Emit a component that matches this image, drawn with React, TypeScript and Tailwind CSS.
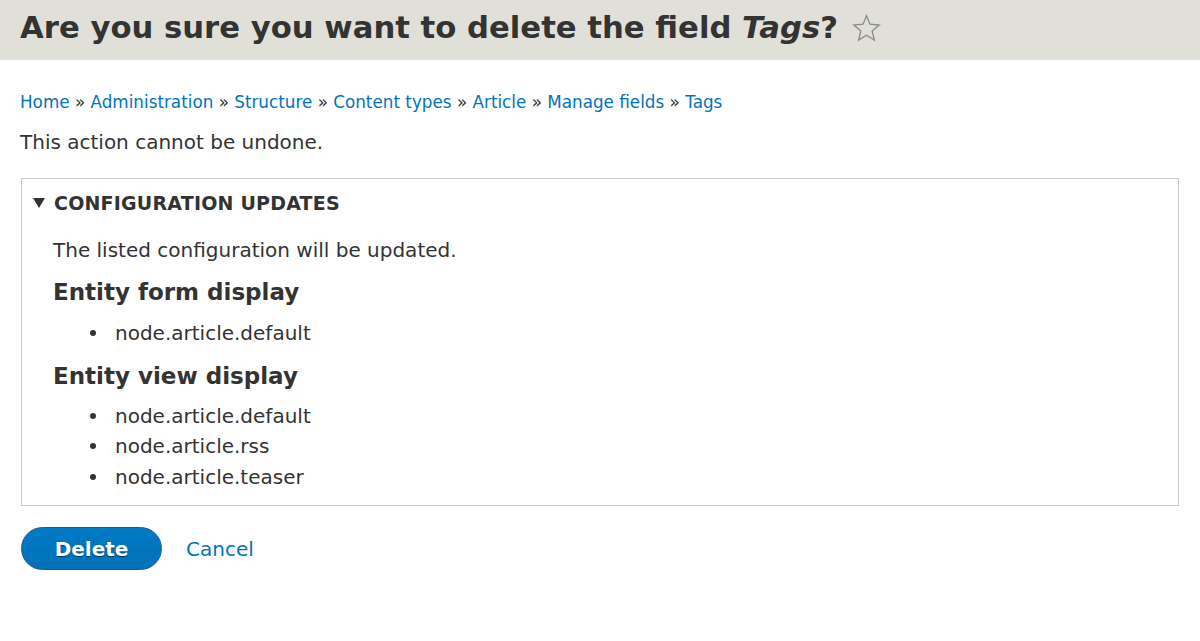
import React from "react";

const crumbs = [
  "Home",
  "Administration",
  "Structure",
  "Content types",
  "Article",
  "Manage fields",
  "Tags",
];

const formDisplays = ["node.article.default"];
const viewDisplays = ["node.article.default", "node.article.rss", "node.article.teaser"];

const StarIcon = () => (
  <svg width="29" height="29" viewBox="0 0 24 24" fill="none" stroke="#8a8a8a" strokeWidth="1.1" strokeLinejoin="miter">
    <polygon points="12,1.5 14.9,8.4 22.5,9.1 16.7,14 18.5,21.6 12,17.6 5.5,21.6 7.3,14 1.5,9.1 9.1,8.4" />
  </svg>
);

const ItemList = ({ items }: { items: string[] }) => (
  <ul className="text-[20px] leading-[30.5px]">
    {items.map((item) => (
      <li key={item} className="flex items-center">
        <span className="ml-[37px] mr-[19px] h-[6px] w-[6px] rounded-full bg-[#333]" />
        {item}
      </li>
    ))}
  </ul>
);

const App = () => {
  return (
    <div className="min-h-[641px] bg-white text-[#333] font-['DejaVu_Sans','Liberation_Sans',sans-serif]">
      <div className="h-[60px] bg-[#e0e0d8] px-5 flex items-center pb-[3px]">
        <h1 className="text-[30.7px] leading-none font-bold flex items-center">
          <span>
            Are you sure you want to delete the field <em className="italic">Tags</em>?
          </span>
          <span className="ml-[14px] inline-flex">
            <StarIcon />
          </span>
        </h1>
      </div>

      <div className="px-5">
        <nav className="mt-[30px] text-[16.8px] leading-[24px]">
          {crumbs.map((c, i) => (
            <span key={c}>
              <a href="#" className="text-[#0074bd]">
                {c}
              </a>
              {i < crumbs.length - 1 && <span className="text-[#333]"> » </span>}
            </span>
          ))}
        </nav>

        <p className="mt-[16px] text-[20px] leading-[24px]">This action cannot be undone.</p>

        <details open className="mt-[24px] mx-[1px] border border-[#ccc] bg-white px-[11px] pb-[13px]">
          <summary className="list-none flex items-center gap-[9px] pt-[12px] text-[19px] font-bold uppercase leading-[24px] tracking-[0.2px]">
            <svg width="12" height="10" viewBox="0 0 12 10">
              <polygon points="0,0 12,0 6,10" fill="#333" />
            </svg>
            Configuration updates
          </summary>
          <div className="pl-[20px] pt-[21px]">
            <p className="text-[20px] leading-[28px]">The listed configuration will be updated.</p>
            <h3 className="mt-[12px] text-[23px] font-bold leading-[32px]">Entity form display</h3>
            <div className="mt-[10px]">
              <ItemList items={formDisplays} />
            </div>
            <h3 className="mt-[11px] text-[23px] font-bold leading-[32px]">Entity view display</h3>
            <div className="mt-[9px]">
              <ItemList items={viewDisplays} />
            </div>
          </div>
        </details>

        <div className="mt-[21px] ml-[1px] flex items-center gap-[24px]">
          <button className="h-[43px] w-[141px] rounded-full border border-[#1e5c90] bg-gradient-to-b from-[#007bc6] to-[#0071b8] text-[20px] font-bold text-white [text-shadow:0_1px_1px_rgba(0,0,0,0.5)]">
            Delete
          </button>
          <a href="#" className="text-[20px] text-[#0074bd]">
            Cancel
          </a>
        </div>
      </div>
    </div>
  );
};

export default App;
